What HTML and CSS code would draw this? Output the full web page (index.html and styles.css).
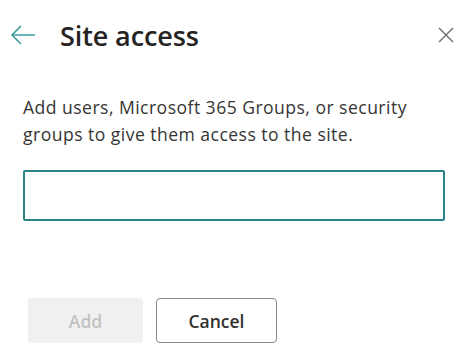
FILE: index.html
```html
<!DOCTYPE html>
<html>
<head>
<meta charset="utf-8">
<link rel="stylesheet" href="styles.css">
</head>
<body>
<div class="panel">
  <div class="header">
    <button class="back" aria-label="Back">
      <svg width="26" height="22" viewBox="0 0 26 22"><path d="M25 11H2M11 2L2 11L11 20" fill="none" stroke="#3f9c9c" stroke-width="1.6"/></svg>
    </button>
    <h1 class="title">Site access</h1>
    <button class="close" aria-label="Close">
      <svg width="16" height="16" viewBox="0 0 16 16"><path d="M1 1L15 15M15 1L1 15" fill="none" stroke="#6b6b6b" stroke-width="1.4"/></svg>
    </button>
  </div>
  <p class="desc">Add users, Microsoft 365 Groups, or security groups to give them access to the site.</p>
  <input class="field" type="text">
  <div class="actions">
    <button class="btn btn-add" disabled>Add</button>
    <button class="btn btn-cancel">Cancel</button>
  </div>
</div>
</body>
</html>
```
FILE: styles.css
```css
* { box-sizing: border-box; }
html, body { margin: 0; background: #fff; }
body { font-family: "Open Sans", "Noto Sans", sans-serif; color: #323130; }
.panel { width: 459px; height: 359px; padding: 0 0 0 23px; display: flex; flex-direction: column; }
.header { display: flex; align-items: center; height: 70px; margin-left: -13px; }
.back { border: 0; background: none; padding: 0; width: 26px; height: 22px; display: flex; }
.title { margin: 0 0 0 24px; font-size: 27px; font-weight: 600; color: #252423; flex: 1; letter-spacing: -0.1px; }
.close { border: 0; background: none; padding: 0; width: 16px; height: 16px; display: flex; margin-right: 5px; }
.desc { margin: 24px 0 0 0; font-size: 17.6px; line-height: 27px; letter-spacing: 0.45px; color: #363534; width: 420px; }
.field { margin-top: 22px; width: 422px; height: 51px; border: 2px solid #2b8585; border-radius: 2px; outline: none; }
.actions { display: flex; gap: 13px; margin-top: 77px; padding-left: 5px; }
.btn { height: 45px; border-radius: 4px; font-family: inherit; font-size: 17.5px; font-weight: 600; }
.btn-add { width: 115px; background: #f0f0f0; color: #c2c2c2; border: 0; }
.btn-cancel { width: 121px; background: #fff; color: #323130; border: 1px solid #8a8886; }
```
